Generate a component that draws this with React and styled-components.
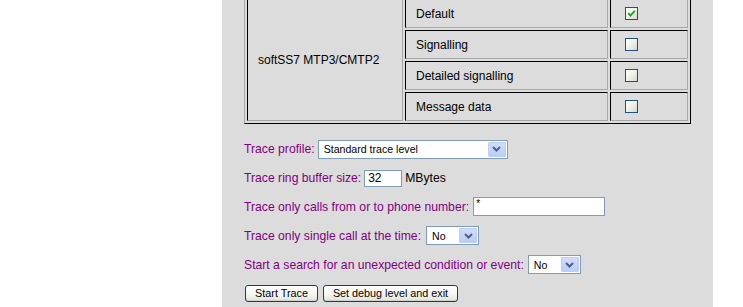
import React from "react";
import styled, { createGlobalStyle } from "styled-components";

const Global = createGlobalStyle`
  html, body { margin: 0; padding: 0; background: #ffffff; }
  body { font-family: "Liberation Sans", Arial, sans-serif; overflow: hidden; }
`;

const Page = styled.div`
  display: flex;
  height: 307px;
  overflow: hidden;
`;

const Panel = styled.div`
  margin-left: 222px;
  width: 491px;
  height: 307px;
  box-sizing: border-box;
  padding-left: 22px;
  background: #dcdcdc;
  overflow: hidden;
`;

const Table = styled.div`
  display: grid;
  grid-template-columns: 156px 203px 78px;
  grid-auto-rows: 29px;
  gap: 2px;
  padding: 2px;
  width: 447px;
  box-sizing: border-box;
  border: 1px solid;
  border-color: #a8a8a8 #000000 #000000 #a8a8a8;
  margin-top: -4px;
`;

const Cell = styled.div`
  box-sizing: border-box;
  border: 1px solid;
  border-color: #000000 #a8a8a8 #a8a8a8 #000000;
  padding: 0 10px;
  display: flex;
  align-items: center;
  font-size: 12px;
  color: #000;
  grid-row: ${(p) => (p.$span ? `span ${p.$span}` : "auto")};
`;

const CheckBox = styled.span`
  box-sizing: border-box;
  width: 13px;
  height: 13px;
  margin-left: 4px;
  border: 1px solid #1c5180;
  background: linear-gradient(135deg, #ffffff 0%, #f0f0ea 50%, #d6d6ce 100%);
  display: flex;
  align-items: center;
  justify-content: center;
`;

const Form = styled.div`
  margin-top: 11px;
  display: flex;
  flex-direction: column;
`;

const Row = styled.div`
  height: 28.8px;
  display: flex;
  align-items: center;
  gap: ${(p) => p.$gap ?? 4}px;
`;

const Label = styled.span`
  font-size: 12.2px;
  color: #800080;
  white-space: nowrap;
`;

const Unit = styled.span`
  font-size: 12.2px;
  color: #000;
`;

const SelectBox = styled.div`
  box-sizing: border-box;
  width: ${(p) => p.$w}px;
  height: 19px;
  border: 1px solid #7f9db9;
  background: #ffffff;
  display: flex;
  align-items: center;
  padding-left: 5px;
  font-size: 10.6px;
  color: #000;
`;

const SelectButton = styled.span`
  margin-left: auto;
  margin-right: 1px;
  box-sizing: border-box;
  width: 18px;
  height: 15px;
  border: 1px solid #bccefa;
  border-radius: 1px;
  background: linear-gradient(180deg, #cfdcfc 0%, #b9cdf8 100%);
  display: flex;
  align-items: center;
  justify-content: center;
`;

const TextInput = styled.div`
  box-sizing: border-box;
  width: ${(p) => p.$w}px;
  height: ${(p) => p.$h}px;
  border: 1px solid #7f9db9;
  background: #ffffff;
  font-size: ${(p) => (p.$small ? 10 : 12)}px;
  line-height: ${(p) => (p.$small ? 12 : 15)}px;
  padding-left: ${(p) => (p.$small ? 2 : 3)}px;
  color: #000;
  display: flex;
  align-items: ${(p) => (p.$small ? "flex-start" : "center")};
`;

const Button = styled.button`
  box-sizing: border-box;
  width: ${(p) => p.$w}px;
  height: 17px;
  padding: 0;
  border: 1px solid #1c3c63;
  border-radius: 3px;
  background: linear-gradient(180deg, #ffffff 0%, #f4f4f0 60%, #e2e2da 100%);
  box-shadow: inset 0 -1px 0 #d0d0c8;
  font-family: "Liberation Sans", Arial, sans-serif;
  font-size: 10.8px;
  color: #000;
  line-height: 15px;
  text-align: center;
  margin-left: ${(p) => p.$ml || 0}px;
`;

const Chevron = () => (
  <svg width="9" height="6" viewBox="0 0 9 6">
    <path d="M1 1 L4.5 4.5 L8 1" fill="none" stroke="#4d6185" strokeWidth="2" />
  </svg>
);

const Check = () => (
  <svg width="9" height="9" viewBox="0 0 9 9">
    <path d="M1.2 4.2 L3.4 6.6 L7.8 1.8" fill="none" stroke="#21a121" strokeWidth="1.9" />
  </svg>
);

const Select = ({ w, value }) => (
  <SelectBox $w={w}>
    {value}
    <SelectButton>
      <Chevron />
    </SelectButton>
  </SelectBox>
);

const levels = [
  { name: "Default", checked: true },
  { name: "Signalling", checked: false },
  { name: "Detailed signalling", checked: false },
  { name: "Message data", checked: false },
];

export default function App() {
  return (
    <>
      <Global />
      <Page>
        <Panel>
          <Table>
            <Cell $span={4}>softSS7 MTP3/CMTP2</Cell>
            {levels.map((l) => (
              <React.Fragment key={l.name}>
                <Cell>{l.name}</Cell>
                <Cell>
                  <CheckBox>{l.checked && <Check />}</CheckBox>
                </Cell>
              </React.Fragment>
            ))}
          </Table>
          <Form>
            <Row $gap={3}>
              <Label>Trace profile:</Label>
              <Select w={190} value="Standard trace level" />
            </Row>
            <Row $gap={3}>
              <Label>Trace ring buffer size:</Label>
              <TextInput $w={38} $h={17}>32</TextInput>
              <Unit>MBytes</Unit>
            </Row>
            <Row $gap={4}>
              <Label>Trace only calls from or to phone number:</Label>
              <TextInput $w={132} $h={19} $small>*</TextInput>
            </Row>
            <Row $gap={5}>
              <Label>Trace only single call at the time:</Label>
              <Select w={53} value="No" />
            </Row>
            <Row $gap={4}>
              <Label>Start a search for an unexpected condition or event:</Label>
              <Select w={53} value="No" />
            </Row>
            <Row $gap={5}>
              <Button $w={73} $ml={1}>Start Trace</Button>
              <Button $w={135}>Set debug level and exit</Button>
            </Row>
          </Form>
        </Panel>
      </Page>
    </>
  );
}
